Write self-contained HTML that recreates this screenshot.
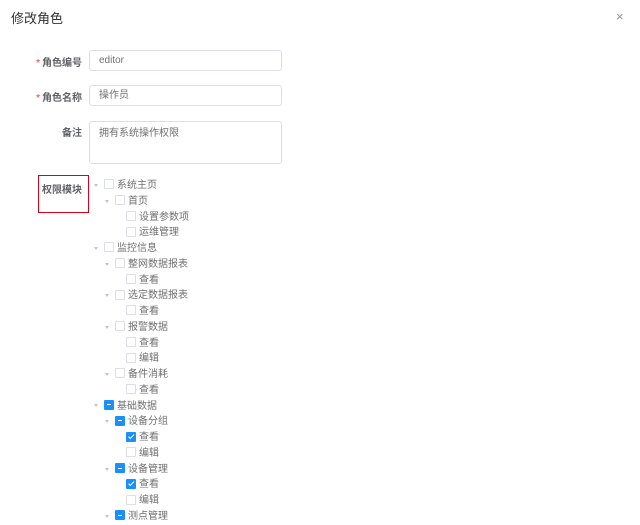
<!DOCTYPE html>
<html><head><meta charset="utf-8"><style>
body{margin:0;width:640px;height:523px;background:#fff;font-family:"Liberation Sans","Noto Sans CJK SC",sans-serif;position:relative;overflow:hidden;color:#606266}
.t{position:absolute;left:11px;top:8px;font-size:13px;color:#303133}
.x{position:absolute;left:616px;top:9px;font-size:13px;color:#909399}
.lb{position:absolute;right:558px;font-size:10px;color:#606266;font-weight:bold}
.lb i{color:#f56c6c;font-style:normal;margin-right:2px}
.in{position:absolute;left:89px;width:193px;border:1px solid #dcdfe6;border-radius:3px;font-size:10px;color:#707070;box-sizing:border-box;padding-left:9px}
.red{position:absolute;left:38px;top:175px;width:51px;height:38px;border:1px solid #d9001b;box-sizing:border-box}
.row{position:absolute;height:16px;font-size:10px;line-height:16px;color:#707070;white-space:nowrap}
.ar{display:inline-block;width:0;height:0;border-left:2.5px solid transparent;border-right:2.5px solid transparent;border-top:3px solid #c0c4cc;vertical-align:middle;margin-right:6px}
.cb{display:inline-block;width:8px;height:8px;border:1px solid #dcdfe6;border-radius:1px;vertical-align:middle;margin-right:3px;position:relative;top:-1px;background:#fff}
.cb.c,.cb.m{background:#1890ff;border-color:#1890ff}
.cb.m:after{content:"";position:absolute;left:2px;top:3.5px;width:4px;height:1px;background:#fff}
.cb.c:after{content:"";position:absolute;left:2.5px;top:0.5px;width:2px;height:4.5px;border:solid #fff;border-width:0 1px 1px 0;transform:rotate(45deg)}
</style></head><body>
<div class="t">修改角色</div>
<div class="x">×</div>
<div class="lb" style="top:54px"><i>*</i>角色编号</div>
<div class="in" style="top:50px;height:21px;line-height:19px">editor</div>
<div class="lb" style="top:89px"><i>*</i>角色名称</div>
<div class="in" style="top:85px;height:21px;line-height:19px">操作员</div>
<div class="lb" style="top:124px">备注</div>
<div class="in" style="top:121px;height:43px;padding-top:2px">拥有系统操作权限</div>
<div class="red"></div>
<div class="lb" style="top:181px">权限模块</div>
<div id="tree"></div>
<script>
var d=[[0,'系统主页',''],[1,'首页',''],[2,'设置参数项',''],[2,'运维管理',''],[0,'监控信息',''],[1,'整网数据报表',''],[2,'查看',''],[1,'选定数据报表',''],[2,'查看',''],[1,'报警数据',''],[2,'查看',''],[2,'编辑',''],[1,'备件消耗',''],[2,'查看',''],[0,'基础数据','m'],[1,'设备分组','m'],[2,'查看','c'],[2,'编辑',''],[1,'设备管理','m'],[2,'查看','c'],[2,'编辑',''],[1,'测点管理','m']];
var h='';d.forEach(function(r,i){var top=178+i*15.76;var left=r[0]==2?126:(94+r[0]*11);
h+='<div class="row" style="top:'+top+'px;left:'+left+'px">'+(r[0]<2?'<span class="ar"></span>':'')+'<span class="cb '+r[2]+'"></span>'+r[1]+'</div>';});
document.getElementById('tree').innerHTML=h;
</script>
</body></html>
